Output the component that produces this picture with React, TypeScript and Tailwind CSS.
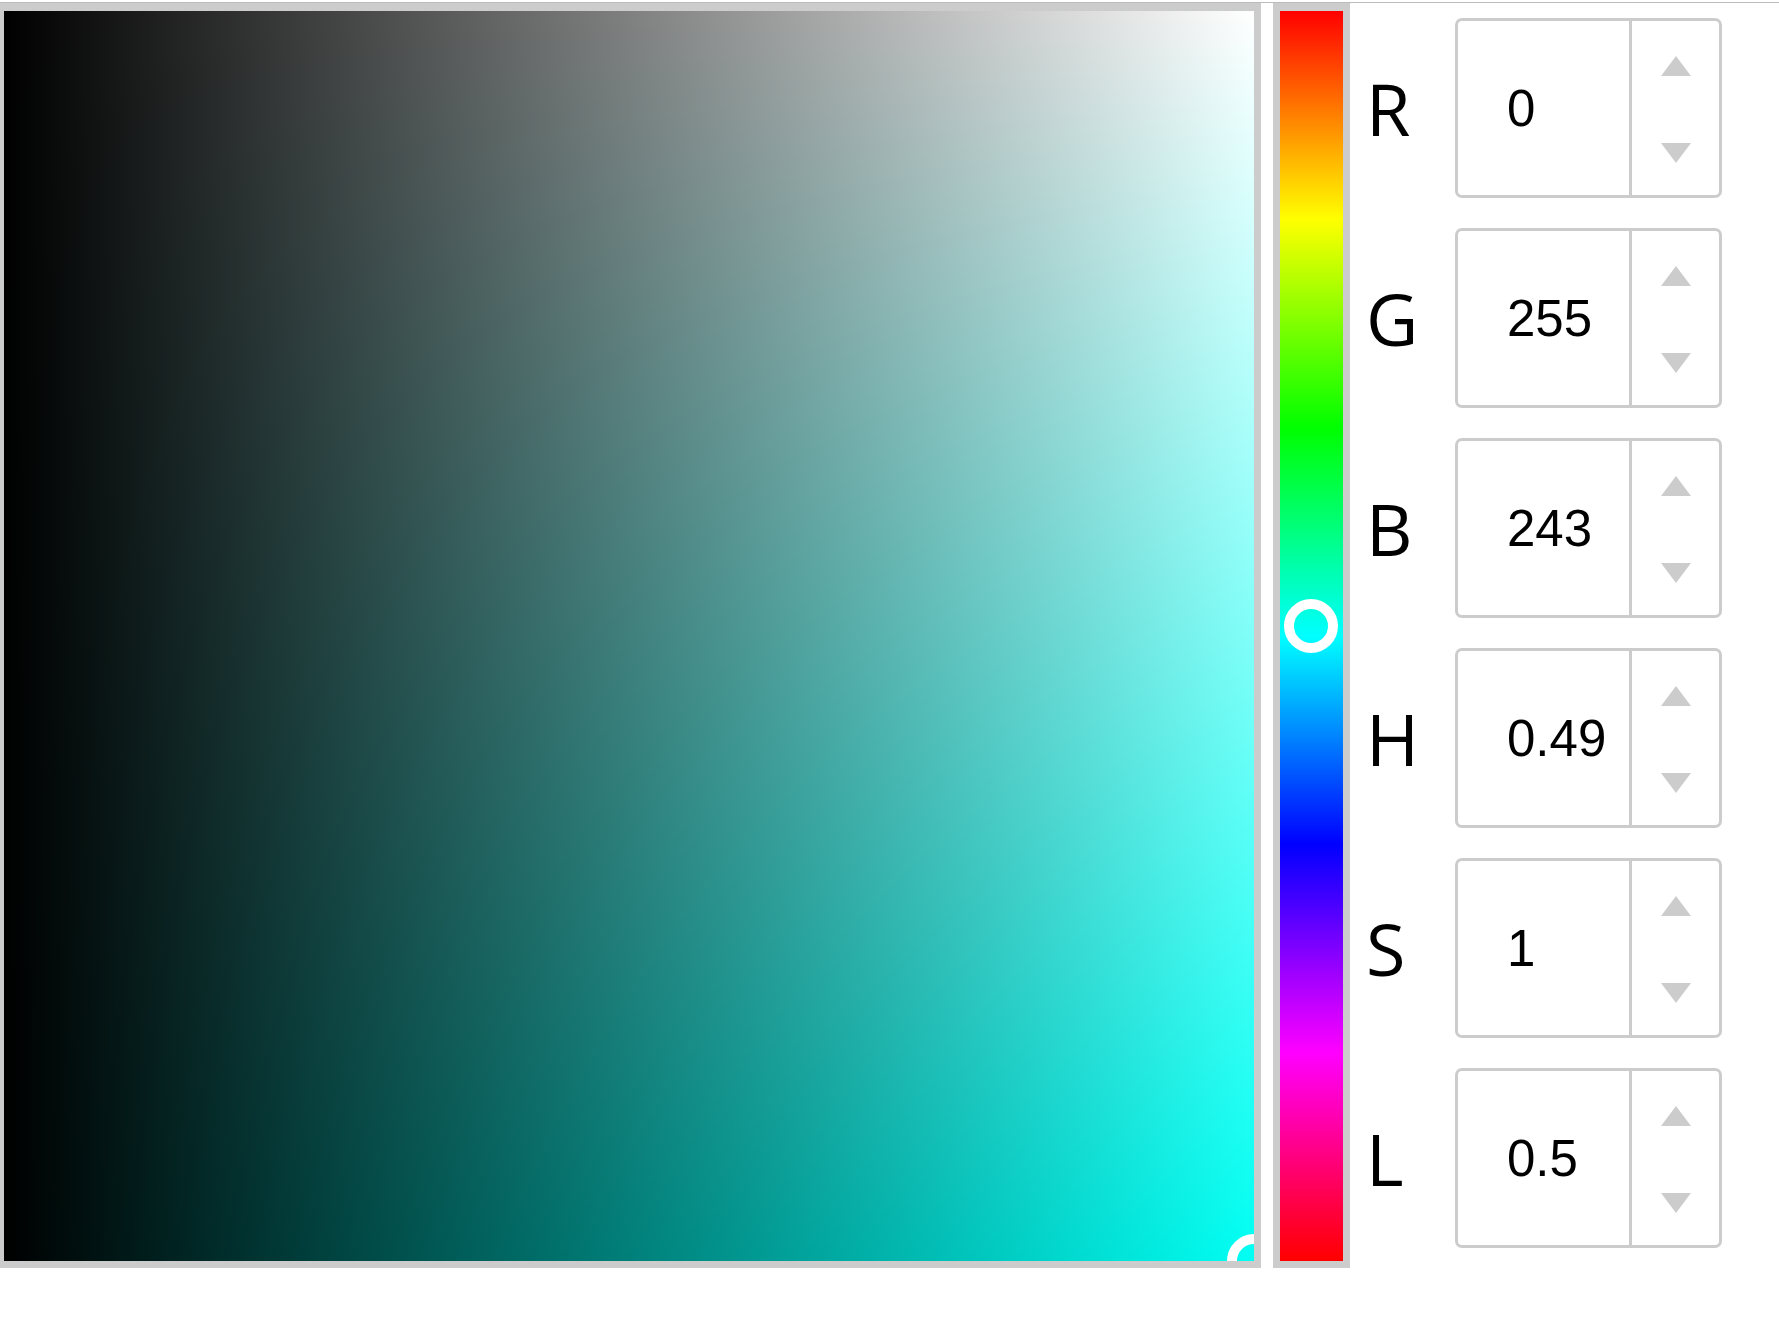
const rows = [
  { label: "R", value: "0" },
  { label: "G", value: "255" },
  { label: "B", value: "243" },
  { label: "H", value: "0.49" },
  { label: "S", value: "1" },
  { label: "L", value: "0.5" },
];

function Spinner() {
  return (
    <div className="w-[87px] flex flex-col items-center justify-between pt-[35px] pb-[32px]">
      <svg width="30" height="20" viewBox="0 0 30 20">
        <polygon points="15,0 30,20 0,20" fill="#cccccc" />
      </svg>
      <svg width="30" height="20" viewBox="0 0 30 20">
        <polygon points="0,0 30,0 15,20" fill="#cccccc" />
      </svg>
    </div>
  );
}

function Field({ label, value }: { label: string; value: string }) {
  return (
    <div className="h-[210px] flex items-center">
      <div
        className="w-[105px] pl-[16px] text-[72px] leading-none text-black"
        style={{ fontFamily: '"Open Sans", "Noto Sans", sans-serif' }}
      >
        {label}
      </div>
      <div className="w-[267px] h-[180px] border-[3px] border-[#cccccc] rounded-[7px] flex bg-white">
        <div
          className="flex-1 flex items-center pl-[49px] text-[51px] leading-none text-black"
          style={{ fontFamily: '"Liberation Sans", Arial, sans-serif' }}
        >
          {value}
        </div>
        <div className="w-[3px] bg-[#cccccc]" />
        <Spinner />
      </div>
    </div>
  );
}

export default function App() {
  return (
    <div className="w-[1779px] h-[1318px] bg-white pt-[2px]">
      <div className="border-t border-[#bbbbbb] flex">
        {/* saturation / value square */}
        <div className="border-[#cccccc] border-t-8 border-l-4 border-r-[7px] border-b-[7px]">
          <div className="relative w-[1250px] h-[1250px] overflow-hidden bg-[linear-gradient(to_bottom,#ffffff,#00fff3)]">
            <div className="absolute inset-0 bg-[linear-gradient(to_right,#000000,transparent)]" />
            <div className="absolute w-[54px] h-[54px] rounded-full border-[10px] border-white left-[1223px] top-[1223px]" />
          </div>
        </div>

        {/* hue strip */}
        <div className="ml-[12px] border-[#cccccc] border-t-8 border-x-[7px] border-b-[7px]">
          <div className="relative w-[63px] h-[1250px] bg-[linear-gradient(to_bottom,#ff0000,#ffff00,#00ff00,#00ffff,#0000ff,#ff00ff,#ff0000)]">
            <div className="absolute w-[54px] h-[54px] rounded-full border-[10px] border-white left-[4px] top-[588px]" />
          </div>
        </div>

        <div className="flex flex-col">
          {rows.map((r) => (
            <Field key={r.label} label={r.label} value={r.value} />
          ))}
        </div>
      </div>
    </div>
  );
}
